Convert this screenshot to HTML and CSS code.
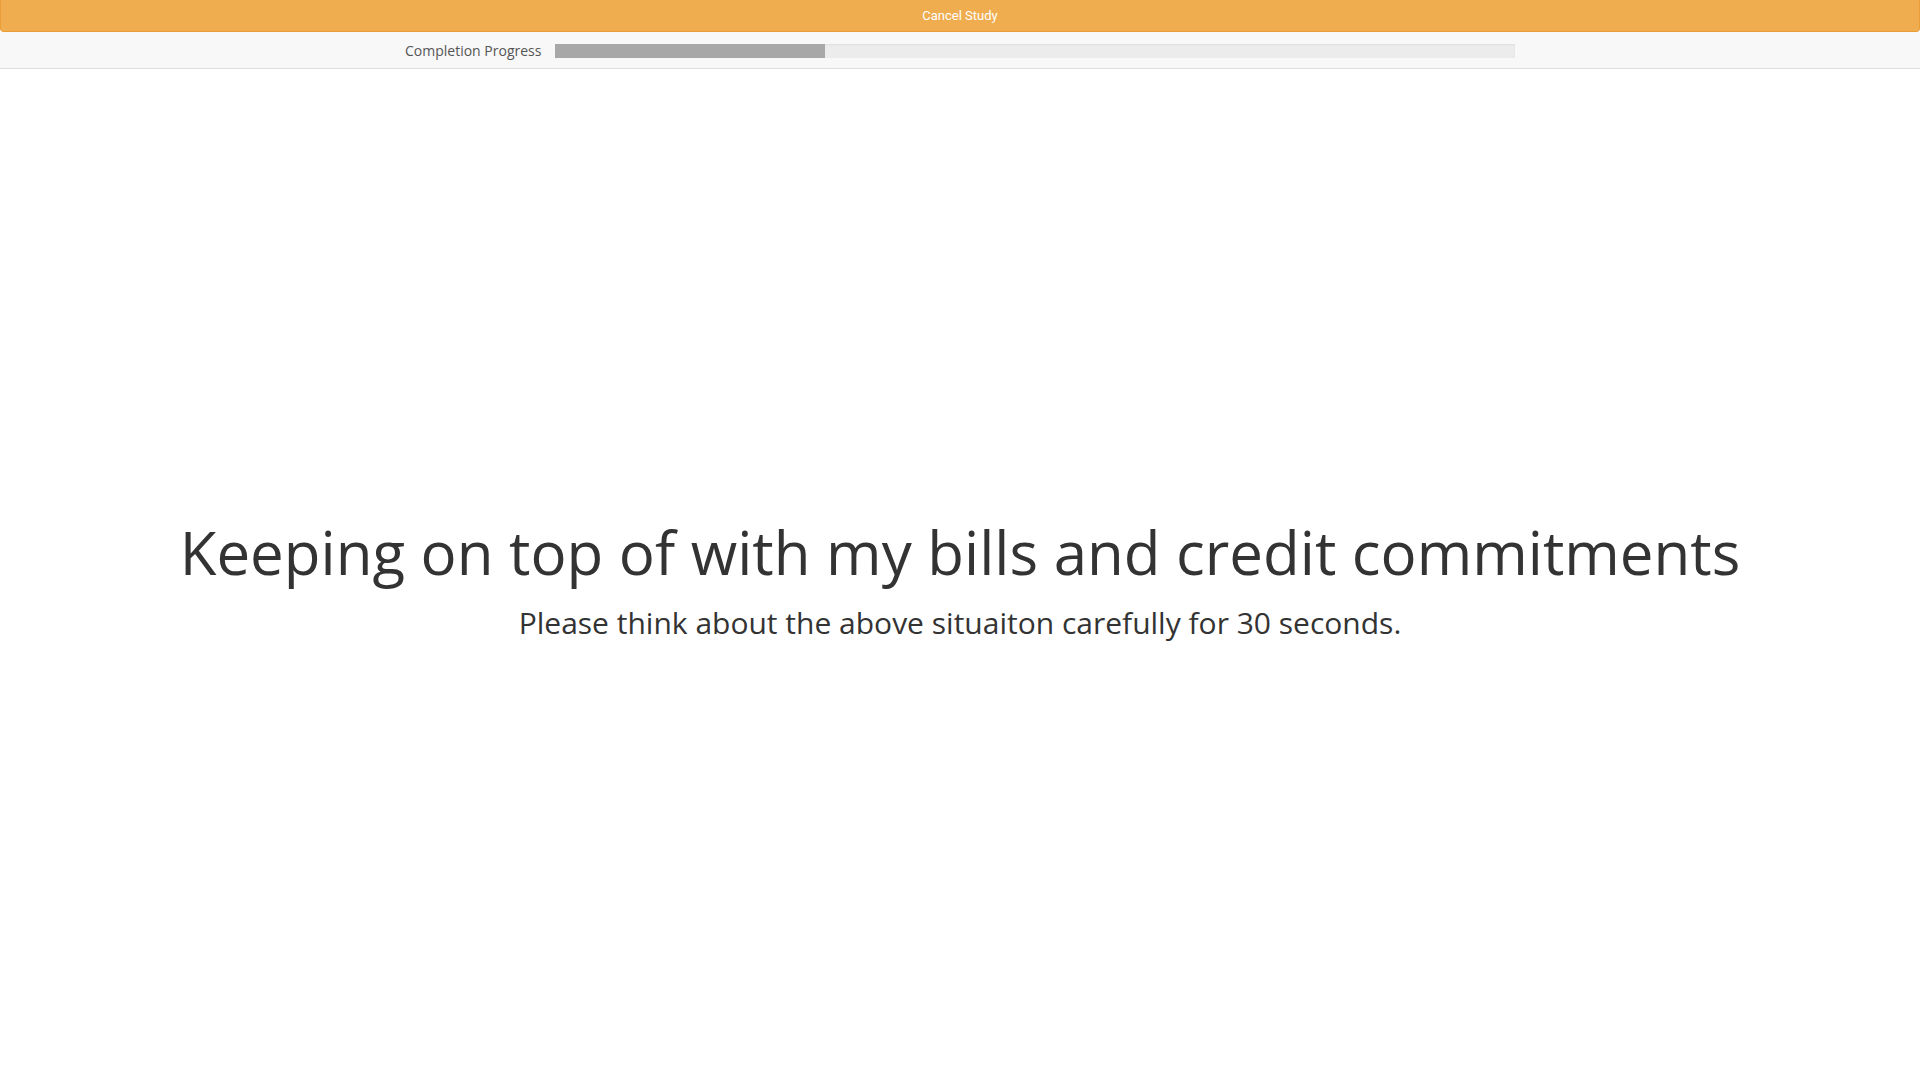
FILE: index.html
```html
<!DOCTYPE html>
<html>
<head>
<meta charset="utf-8">
<link rel="stylesheet" href="styles.css">
</head>
<body>
<div class="page">
  <div class="cancel-bar">Cancel Study</div>
  <div class="progress-row">
    <span class="progress-label">Completion Progress</span>
    <div class="progress-track"><div class="progress-fill" style="width:28.1%"></div></div>
  </div>
  <main class="stage">
    <h1 class="situation">Keeping on top of with my bills and credit commitments</h1>
    <p class="instruction">Please think about the above situaiton carefully for 30 seconds.</p>
  </main>
</div>
</body>
</html>
```
FILE: styles.css
```css
html, body {
  margin: 0;
  padding: 0;
  height: 100%;
  background: #ffffff;
}
body {
  font-family: "Open Sans", "Noto Sans", sans-serif;
  color: #333333;
}
.page {
  display: flex;
  flex-direction: column;
  height: 100%;
}
.cancel-bar {
  height: 31px;
  line-height: 31px;
  background: #efad4f;
  border: 1px solid #eb9d38;
  border-top: 0;
  border-radius: 0 0 4px 4px;
  color: #ffffff;
  text-align: center;
  font-family: Roboto, "Liberation Sans", sans-serif;
  font-size: 13px;
}
.progress-row {
  height: 37px;
  background: #f8f8f8;
  border-bottom: 1px solid #dddddd;
  display: flex;
  align-items: flex-start;
  padding-left: 405px;
  box-sizing: border-box;
  padding-top: 12px;
}
.progress-label {
  font-size: 14px;
  line-height: 14px;
  color: #555555;
  margin-right: 14px;
}
.progress-track {
  width: 960px;
  height: 14px;
  background: #ececec;
  box-shadow: inset 0 1px 2px rgba(0,0,0,0.06);
}
.progress-fill {
  height: 100%;
  background: #a8a8a8;
}
.stage {
  flex: 1;
  display: flex;
  flex-direction: column;
  align-items: center;
  justify-content: center;
  text-align: center;
  padding-top: 9px;
}
.situation {
  margin: 0;
  font-weight: 400;
  font-size: 60px;
  line-height: 1.2;
  color: #333333;
}
.instruction {
  margin: 15px 0 0;
  font-size: 30px;
  line-height: 1.3;
  color: #333333;
}
```
